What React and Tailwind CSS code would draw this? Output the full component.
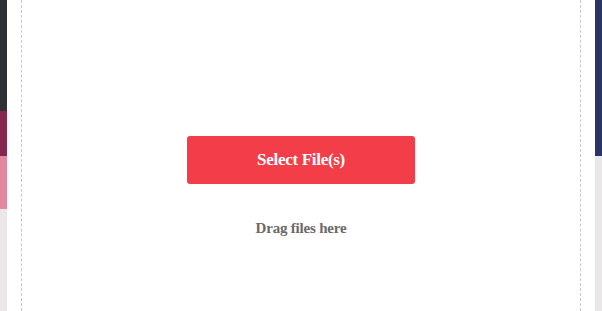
export default function App() {
  return (
    <div className="flex h-[311px] w-[602px] overflow-hidden bg-white" style={{ fontFamily: '"Liberation Serif", "DejaVu Serif", serif' }}>
      {/* left edge */}
      <div className="flex w-[7px] shrink-0 flex-col">
        <div className="h-[111px] bg-[#2f2f36]" />
        <div className="h-[45px] bg-[#85264f]" />
        <div className="h-[53px] bg-[#e2889e]" />
        <div className="flex-1 bg-[#ebe6e7]" />
      </div>

      <div className="w-[14px] shrink-0" />

      {/* drop zone */}
      <div className="flex w-[560px] shrink-0 flex-col items-center border-x border-dashed border-[#c8c8c8] pt-[136px]">
        <button className="h-[48px] w-[228px] rounded-[3px] bg-[#f33e4a] text-[17px] font-bold tracking-[-0.3px] text-white">
          Select File(s)
        </button>
        <p className="mt-[33px] text-[15px] font-bold tracking-[-0.2px] text-[#6a6a6a]">Drag files here</p>
      </div>

      <div className="w-[14px] shrink-0" />

      {/* right edge */}
      <div className="flex w-[7px] shrink-0 flex-col">
        <div className="h-[156px] bg-[#2b3565]" />
        <div className="flex-1 bg-[#ebe6e7]" />
      </div>
    </div>
  );
}
